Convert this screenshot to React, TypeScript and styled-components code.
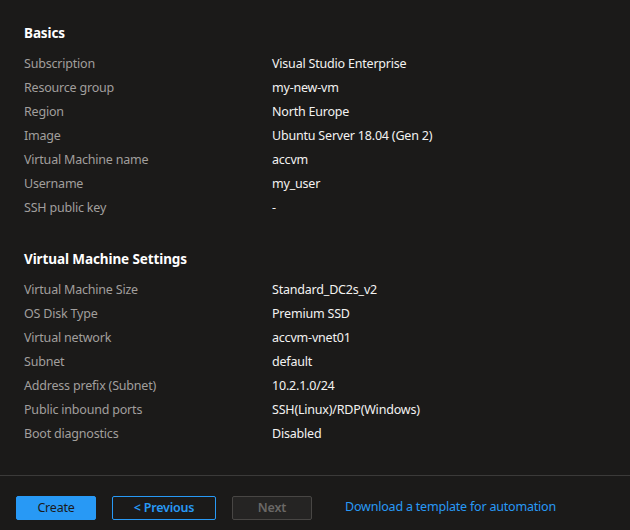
import React from "react";
import styled, { createGlobalStyle } from "styled-components";

const Global = createGlobalStyle`
  html, body { margin: 0; padding: 0; background: #1b1a19; }
  body { font-family: "Noto Sans", "Open Sans", sans-serif; }
`;

const Page = styled.div`
  width: 630px;
  height: 530px;
  background: #1b1a19;
  display: flex;
  flex-direction: column;
  box-sizing: border-box;
`;

const Content = styled.div`
  padding: 23px 24px 0 24px;
  display: flex;
  flex-direction: column;
  gap: 30px;
`;

const Section = styled.section`
  display: flex;
  flex-direction: column;
`;

const Heading = styled.h2`
  margin: 0 0 8px 0;
  font-size: 13.5px;
  letter-spacing: -0.1px;
  line-height: 20px;
  font-weight: 700;
  color: #ffffff;
`;

const Row = styled.div`
  display: grid;
  grid-template-columns: 248px 1fr;
  height: 24px;
  box-sizing: border-box;
  padding-top: 2px;
  align-items: center;
  font-size: 12.5px;
  letter-spacing: -0.2px;
  line-height: 20px;
`;

const Label = styled.span`
  color: #a19f9d;
`;

const Value = styled.span`
  color: #f3f2f1;
`;

const Footer = styled.div`
  margin-top: 30px;
  border-top: 1px solid #3b3a39;
  padding: 20px 16px 0 16px;
  display: flex;
  align-items: center;
  gap: 16px;
`;

const Button = styled.button<{ $variant: "primary" | "outline" | "disabled"; $w: number }>`
  width: ${(p) => p.$w}px;
  height: 24px;
  box-sizing: border-box;
  border-radius: 2px;
  font-family: inherit;
  font-size: 12.5px;
  letter-spacing: -0.2px;
  line-height: 20px;
  font-weight: 600;
  padding: 0 0 1px 0;
  cursor: pointer;
  ${(p) =>
    p.$variant === "primary"
      ? `background:#2899f5;border:1px solid #2899f5;color:#1b1a19;font-weight:400;`
      : p.$variant === "outline"
      ? `background:transparent;border:1px solid #2899f5;color:#2899f5;`
      : `background:#252423;border:1px solid #484644;color:#6a6866;cursor:default;`}
`;

const Link = styled.a`
  margin-left: 17px;
  margin-bottom: 2px;
  font-size: 12.5px;
  letter-spacing: -0.2px;
  line-height: 20px;
  color: #2899f5;
  text-decoration: none;
`;

const basics: [string, string][] = [
  ["Subscription", "Visual Studio Enterprise"],
  ["Resource group", "my-new-vm"],
  ["Region", "North Europe"],
  ["Image", "Ubuntu Server 18.04 (Gen 2)"],
  ["Virtual Machine name", "accvm"],
  ["Username", "my_user"],
  ["SSH public key", "-"],
];

const vmSettings: [string, string][] = [
  ["Virtual Machine Size", "Standard_DC2s_v2"],
  ["OS Disk Type", "Premium SSD"],
  ["Virtual network", "accvm-vnet01"],
  ["Subnet", "default"],
  ["Address prefix (Subnet)", "10.2.1.0/24"],
  ["Public inbound ports", "SSH(Linux)/RDP(Windows)"],
  ["Boot diagnostics", "Disabled"],
];

function Summary({ title, rows }: { title: string; rows: [string, string][] }) {
  return (
    <Section>
      <Heading>{title}</Heading>
      {rows.map(([l, v]) => (
        <Row key={l}>
          <Label>{l}</Label>
          <Value>{v}</Value>
        </Row>
      ))}
    </Section>
  );
}

export default function App() {
  return (
    <>
      <Global />
      <Page>
        <Content>
          <Summary title="Basics" rows={basics} />
          <Summary title="Virtual Machine Settings" rows={vmSettings} />
        </Content>
        <Footer>
          <Button $variant="primary" $w={80}>Create</Button>
          <Button $variant="outline" $w={104}>&lt; Previous</Button>
          <Button $variant="disabled" $w={80}>Next</Button>
          <Link href="#">Download a template for automation</Link>
        </Footer>
      </Page>
    </>
  );
}
